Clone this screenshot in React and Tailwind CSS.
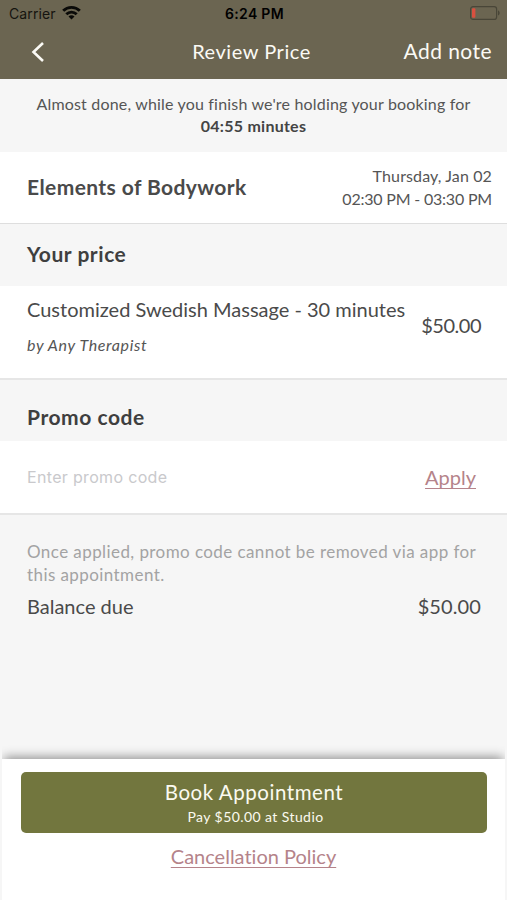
import React, { useState } from 'react';

const StatusBar = () => (
  <div className="grid h-[27px] grid-cols-3 items-center pl-[9px] pr-[7px] font-['Inter',sans-serif] text-[14px] text-[#15140f]">
    <div className="flex items-center gap-[6px]">
      <span className="tracking-[0.1px]">Carrier</span>
      <svg className="-mt-[2px]" width="19" height="15" viewBox="0 0 19 15" fill="none" stroke="#0a0a08" strokeWidth="2.9">
        <path d="M1.2 5.8C5.8 1.2 13.2 1.2 17.8 5.8" />
        <path d="M4.3 9.2C7.2 6.4 11.8 6.4 14.7 9.2" />
        <path d="M9.5 14.4L6.5 11.5C8.3 9.9 10.7 9.9 12.5 11.5Z" fill="#0a0a08" stroke="none" />
      </svg>
    </div>
    <span className="text-center font-semibold tracking-[0.3px] text-black">6:24 PM</span>
    <svg className="-mt-px justify-self-end" width="30" height="14" viewBox="0 0 30 14">
      <rect x="0.6" y="0.6" width="26" height="12.8" rx="2.5" fill="none" stroke="#494638" strokeWidth="1.2" />
      <rect x="2" y="2.2" width="3.4" height="9.6" rx="1" fill="#d9503f" />
      <path d="M28 4.6C30.2 5.2 30.2 8.8 28 9.4Z" fill="#494638" />
    </svg>
  </div>
);

const SectionTitle = ({ className, children }) => (
  <h2 className={`flex items-center bg-[#f6f6f6] px-[27px] text-[21px] font-bold tracking-[0.55px] text-[#3f3f3f] ${className}`}>
    {children}
  </h2>
);

const App = () => {
  const [promoCode, setPromoCode] = useState('');

  return (
    <div className="flex h-[900px] w-full flex-col overflow-hidden bg-[#f6f6f6] font-['Lato',sans-serif] text-[#4a4a4a]">
      <header className="h-[79px] shrink-0 bg-[#6b6551]">
        <StatusBar />
        <div className="grid h-12 grid-cols-[1fr_auto_1fr] items-center pl-[31px] pr-[15px] text-[20px] text-[#fbfaf5]">
          <button aria-label="Back" className="w-fit pt-[2px]">
            <svg width="14" height="20" viewBox="0 0 14 20" fill="none" stroke="currentColor" strokeWidth="2.6">
              <path d="M12 1L2.5 10L12 19" />
            </svg>
          </button>
          <h1 className="whitespace-nowrap pr-[20px] text-center tracking-[0.55px]">Review Price</h1>
          <button className="justify-self-end text-[21px] tracking-[0.45px]">Add note</button>
        </div>
      </header>

      {/* Hold timer */}
      <div className="h-[73px] shrink-0 pt-[14px] text-center text-[16px] leading-[22px] text-[#555]">
        <p className="tracking-[0.18px]">Almost done, while you finish we're holding your booking for</p>
        <p className="font-bold tracking-[0.25px] text-[#444]">04:55 minutes</p>
      </div>

      <div className="flex h-[72px] shrink-0 items-center justify-between border-b border-[#dedede] bg-white pb-[2px] pl-[27px] pr-[15px]">
        <h2 className="text-[21px] font-bold tracking-[0.4px]">Elements of Bodywork</h2>
        <div className="text-right text-[16px] leading-[23px] text-[#555]">
          <p className="tracking-[0.12px]">Thursday, Jan 02</p>
          <p className="tracking-[-0.2px]">02:30 PM - 03:30 PM</p>
        </div>
      </div>

      <SectionTitle className="h-[62px] shrink-0 pb-[2px]">Your price</SectionTitle>
      <div className="flex h-[94px] shrink-0 justify-between border-b-2 border-[#e6e6e6] bg-white pl-[27px] pr-[26px]">
        <div className="pt-[9px]">
          <p className="text-[20px] leading-7">Customized Swedish Massage - 30 minutes</p>
          <p className="mt-[11px] text-[16px] italic leading-[22px] tracking-[0.65px] text-[#555]">by Any Therapist</p>
        </div>
        <span className="pt-[25px] text-[20px] leading-7 tracking-[-0.5px]">$50.00</span>
      </div>

      <SectionTitle className="h-[61px] shrink-0 pt-3">Promo code</SectionTitle>
      <div className="flex h-[74px] shrink-0 items-center justify-between border-b-2 border-[#e6e6e6] bg-white pl-[27px] pr-[31px]">
        <input
          className="w-[300px] font-['Inter',sans-serif] text-[16px] tracking-[0.33px] outline-none placeholder:text-[#c9c9cc]"
          placeholder="Enter promo code"
          value={promoCode}
          onChange={(e) => setPromoCode(e.target.value)}
        />
        <button className="text-[20px] text-[#b5838a] underline decoration-1 underline-offset-[3px]">Apply</button>
      </div>

      <div className="grow pl-[27px] pr-[26px] pt-[25px]">
        <p className="whitespace-nowrap text-[17px] leading-[23px] tracking-[0.42px] text-[#a3a3a3]">
          Once applied, promo code cannot be removed via app for<br />this appointment.
        </p>
        <div className="mt-[6px] flex justify-between text-[20px] leading-7">
          <span>Balance due</span>
          <span className="tracking-[0.1px]">$50.00</span>
        </div>
      </div>

      <footer className="mx-[2px] flex h-[141px] shrink-0 flex-col items-center bg-white pt-[13px] shadow-[0_-4px_10px_-2px_rgba(0,0,0,0.42)] [clip-path:inset(-20px_0_0_0)]">
        <button className="ml-px flex h-[61px] w-[466px] flex-col items-center rounded-[5px] bg-[#72763e] pt-[6px] text-[#fbfaf0]">
          <span className="text-[20.5px] leading-7 tracking-[0.55px]">Book Appointment</span>
          <span className="pl-[3px] text-[14px] leading-[21px] tracking-[0.42px]">Pay $50.00 at Studio</span>
        </button>
        <a className="mt-[9px] text-[20px] leading-7 text-[#b5838a] underline decoration-1 underline-offset-[3px] [font-variant-ligatures:none]">
          Cancellation Policy
        </a>
      </footer>
    </div>
  );
};

export default App;
